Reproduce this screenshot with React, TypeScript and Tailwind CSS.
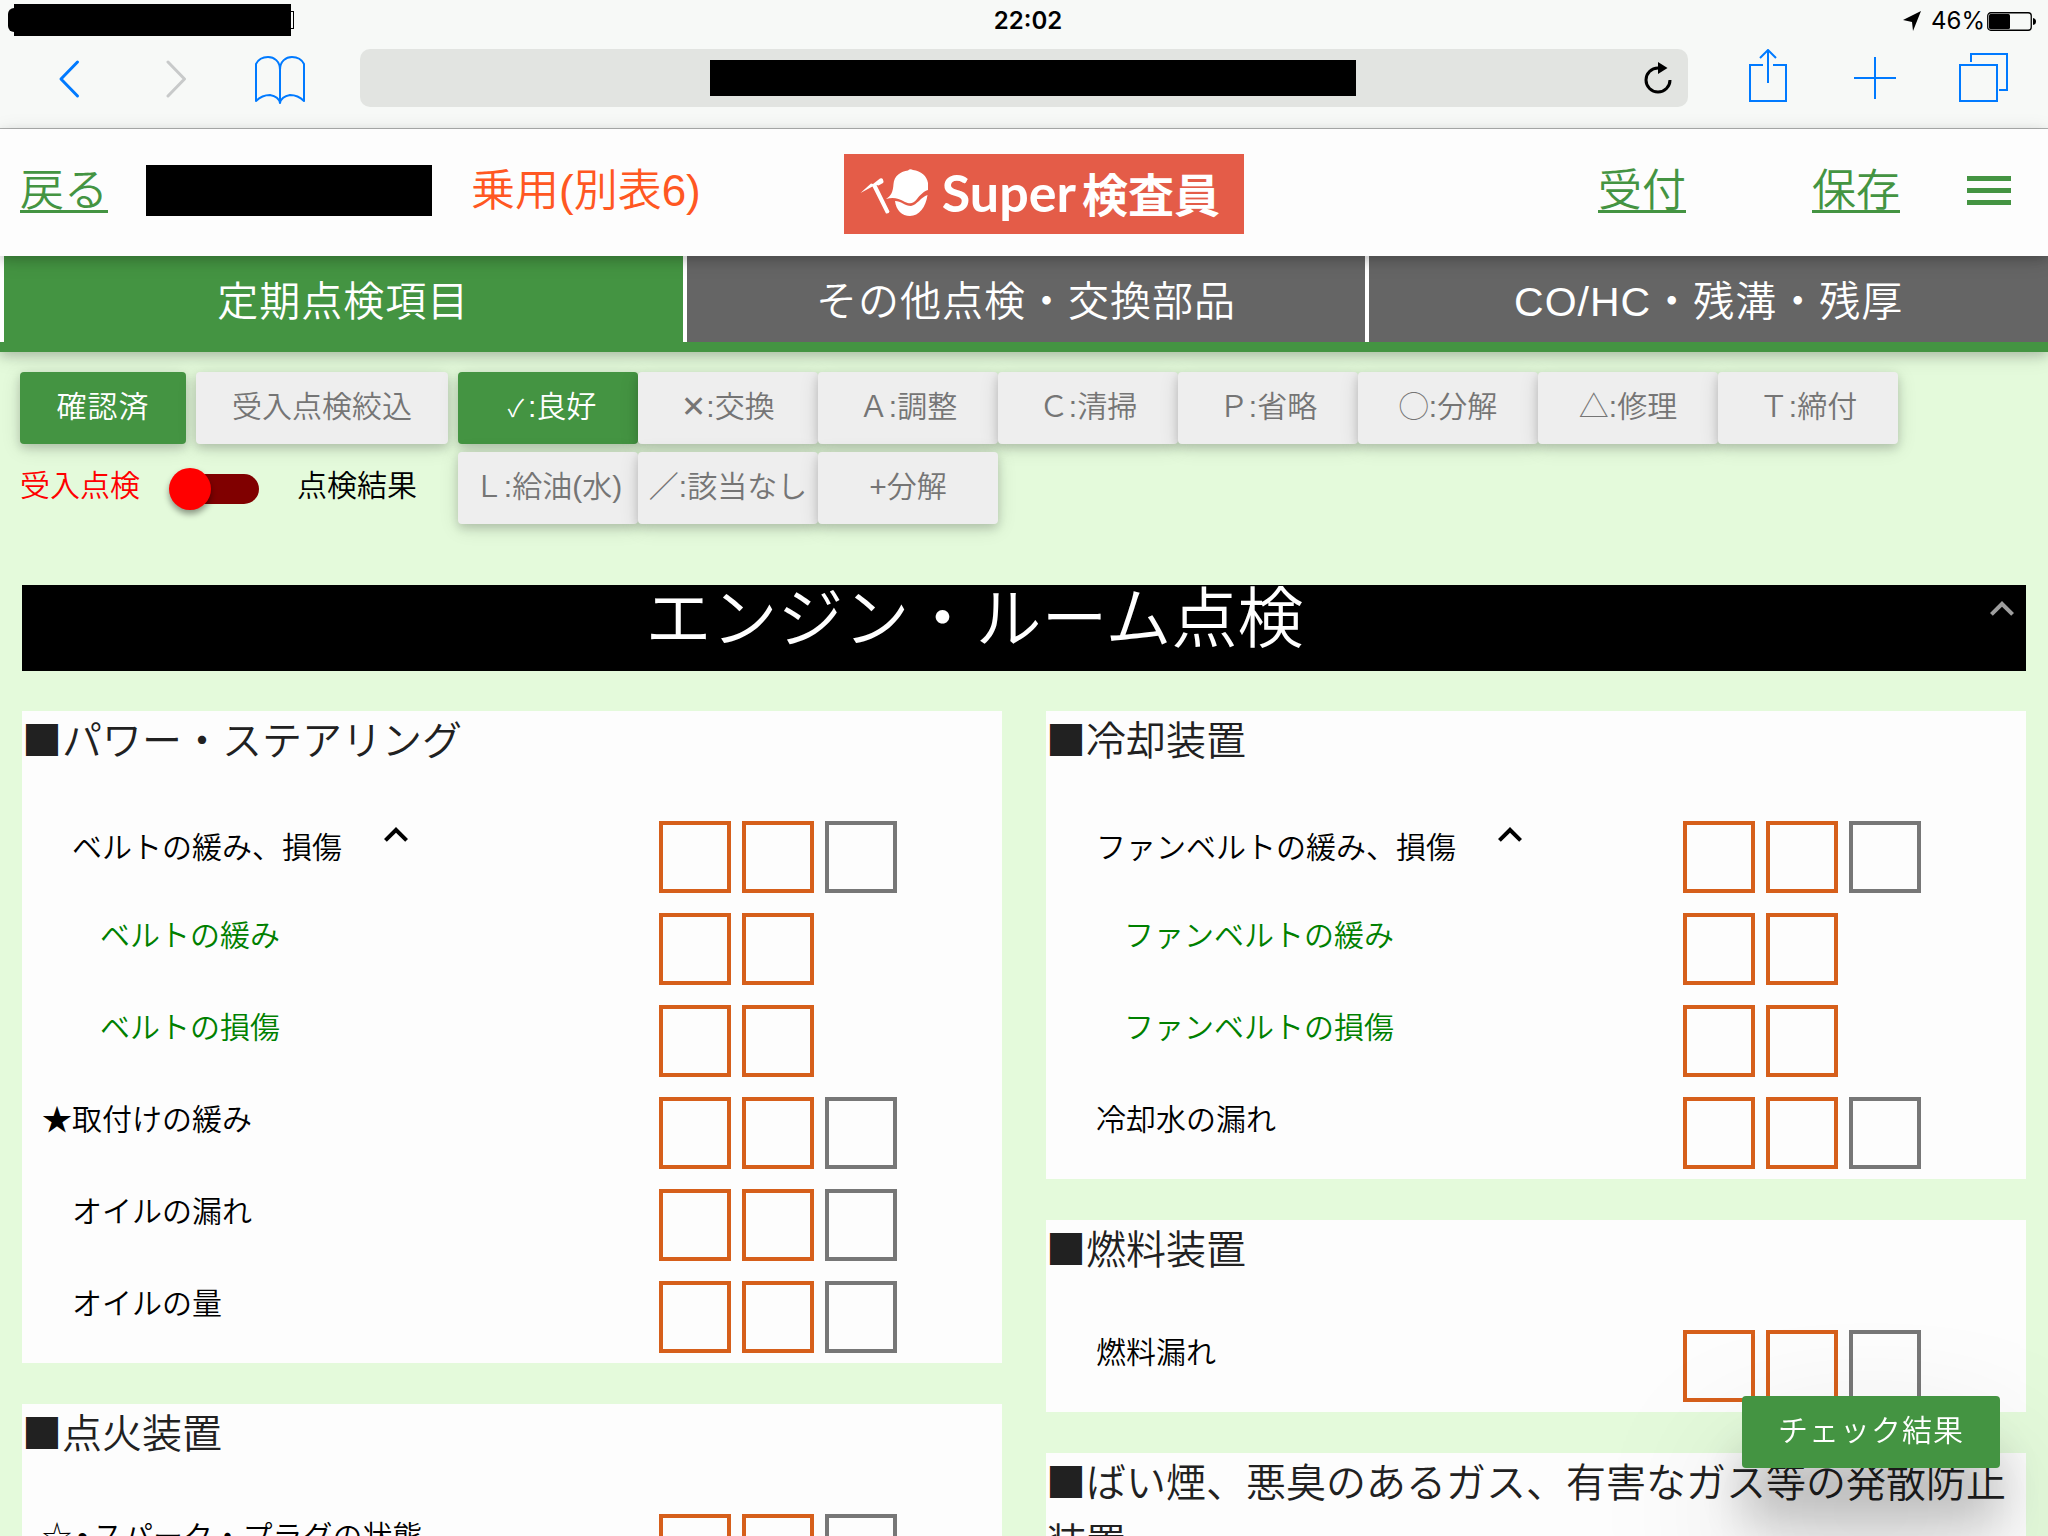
import React, { useState } from 'react';
import clsx from 'clsx';

const FONT = "font-['Liberation_Sans','Noto_Sans_CJK_JP',sans-serif]";
const FONT_JP = "font-['Noto_Sans_CJK_JP',sans-serif]";
const Z1 = 'shadow-[0_4px_10px_rgba(0,0,0,0.16),0_4px_20px_rgba(0,0,0,0.12)]';

const TABS = ['定期点検項目', 'その他点検・交換部品', 'CO/HC・残溝・残厚'];

const MARKS = [
  ['✓', ':良好'],
  ['✕', ':交換'],
  ['Ａ', ':調整'],
  ['Ｃ', ':清掃'],
  ['Ｐ', ':省略'],
  ['◯', ':分解'],
  ['△', ':修理'],
  ['Ｔ', ':締付'],
  ['Ｌ', ':給油(水)'],
  ['／', ':該当なし'],
  ['+', '分解'],
];

type Item = { label: string; mark?: string; bullet?: boolean; sub?: boolean; open?: boolean };
type Section = { title: string; items: Item[] };

const LEFT: Section[] = [
  {
    title: 'パワー・ステアリング',
    items: [
      { label: 'ベルトの緩み、損傷', open: true },
      { label: 'ベルトの緩み', sub: true },
      { label: 'ベルトの損傷', sub: true },
      { label: '取付けの緩み', mark: '★' },
      { label: 'オイルの漏れ' },
      { label: 'オイルの量' },
    ],
  },
  {
    title: '点火装置',
    items: [{ label: 'スパーク・プラグの状態', mark: '☆', bullet: true }],
  },
];

const RIGHT: Section[] = [
  {
    title: '冷却装置',
    items: [
      { label: 'ファンベルトの緩み、損傷', open: true },
      { label: 'ファンベルトの緩み', sub: true },
      { label: 'ファンベルトの損傷', sub: true },
      { label: '冷却水の漏れ' },
    ],
  },
  { title: '燃料装置', items: [{ label: '燃料漏れ' }] },
  { title: 'ばい煙、悪臭のあるガス、有害なガス等の発散防止装置', items: [] },
];

const ExpandLess: React.FC = () => (
  <svg viewBox="0 0 24 24" className="size-12" fill="currentColor">
    <path d="M12 8l-6 6 1.41 1.41L12 10.83l4.59 4.58L18 14z" />
  </svg>
);

const BrowserBar: React.FC = () => (
  <div className="shrink-0 border-b border-[#b0b2b1] bg-[#f7f9f7]">
    <div className="grid h-10 grid-cols-3 items-center pl-2 text-2xl text-black">
      <div className="flex items-center">
        <div className="h-6 w-[6px] rounded-l-md bg-black" />
        <div className="h-8 w-[277px] bg-black" />
        <div className="h-[18px] w-[3px] border border-l-0 border-black" />
      </div>
      <time className="pt-[2px] text-center font-['Inter',sans-serif] font-semibold">22:02</time>
      <div className="flex items-center justify-end gap-[2px] pr-3 pt-[2px] font-['Inter',sans-serif]">
        <svg viewBox="0 0 18 22" className="mr-2 h-[22px] w-[18px]">
          <path d="M18 1L0 10l9 2 1 9z" />
        </svg>
        <span>46%</span>
        <svg viewBox="0 0 49 19" className="h-[19px] w-[49px]">
          <rect x="0.75" y="0.75" width="43.5" height="17.5" rx="3" fill="none" stroke="#000" strokeWidth="1.3" />
          <rect x="2" y="2" width="21" height="15" rx="1.5" />
          <path d="M46 6q3 .5 3 3.500t-3 3.500z" />
        </svg>
      </div>
    </div>

    <div className="flex h-[88px] items-center pb-[12px] pl-[46px] pr-[38px] text-[#007aff]">
      <button aria-label="前へ" className="mr-[72px]">
        <svg viewBox="0 0 48 50" className="h-[50px] w-12" fill="none" stroke="currentColor" strokeWidth="3" strokeLinecap="round" strokeLinejoin="round">
          <path d="M31.500 9L15 26l16.500 17" />
        </svg>
      </button>
      <button aria-label="次へ" className="mr-[52px] text-[#c8caca]">
        <svg viewBox="0 0 36 50" className="h-[50px] w-9" fill="none" stroke="currentColor" strokeWidth="3" strokeLinecap="round" strokeLinejoin="round">
          <path d="M2 9l16.500 17L2 43" />
        </svg>
      </button>
      <button aria-label="ブックマーク" className="mr-[54px]">
        <svg viewBox="0 0 52 52" className="size-[52px]" fill="none" stroke="currentColor" strokeWidth="2" strokeLinejoin="round">
          <path d="M26 51V18C26 9 20 5 14 5C8 5 4 8 2 12V49C7 44 11 43 16 43C22 44 25 46 26 51C27 46 30 44 36 43C41 43 45 44 50 49V12C48 8 44 5 38 5C32 5 26 9 26 18" />
        </svg>
      </button>
      <div className="flex h-[58px] flex-1 items-center rounded-[10px] bg-[#e2e4e1] pr-4">
        <div className="flex-1 pl-[62px]">
          <div className="mx-auto h-9 w-[646px] bg-black" />
        </div>
        <button aria-label="再読み込み" className="text-black">
          <svg viewBox="0 0 28 32" className="h-8 w-7" fill="none" stroke="currentColor" strokeWidth="3">
            <path d="M14 6A12 12 0 1 0 26 18" />
            <path d="M14 0l9.500 6L14 12z" fill="currentColor" stroke="none" />
          </svg>
        </button>
      </div>
      <button aria-label="共有" className="ml-[60px]">
        <svg viewBox="0 0 40 58" className="h-[58px] w-10" fill="none" stroke="currentColor" strokeWidth="2">
          <path d="M15 16H2v36h36V16H25M20 34V1M12 9l8-8 8 8" />
        </svg>
      </button>
      <button aria-label="新規タブ" className="ml-[65px]">
        <svg viewBox="0 0 44 44" className="size-11" fill="none" stroke="currentColor" strokeWidth="2">
          <path d="M22 1v42M1 22h42" />
        </svg>
      </button>
      <button aria-label="タブ一覧" className="ml-[61px]">
        <svg viewBox="0 0 52 52" className="size-[52px]" fill="none" stroke="currentColor" strokeWidth="2">
          <path d="M2 13h37v36H2zM13 10V2h36v36h-8" />
        </svg>
      </button>
    </div>
  </div>
);

const Logo: React.FC = () => (
  <div className="flex h-20 w-[400px] items-center bg-[#e45c48] pb-1 pl-4 text-white">
    <svg viewBox="0 -2 70 64" className="h-16 w-[70px] shrink-0" fill="currentColor">
      <path d="M.5 31L11 21.500 13 22 20 16.500Q22 15.500 23 17.500Q24 20 23 21L18.500 23.500 16.500 23 29.500 49.500Q29 52 26 51.500L12.500 24.500Z" />
      <path d="M26 37C31 34 33 30 33.500 22C34 14 41 9 48 8.500Q50 6.500 53 8C61 9 67 14 68 21V28C64 29 60 33 57 37C53 42 50 42 45 40C38 36 33 35 26 37Z" />
      <path d="M35 39C41 39 45 44 51 44C57 43 61 35 67.500 33C66 45 59 54 50 54C42 54 36 48 35 39Z" />
    </svg>
    <span className="ml-3 font-['Lato',sans-serif] text-[52px] font-bold leading-[60px]">Super</span>
    <span className={clsx(FONT_JP, 'ml-[6px] text-[46px] font-bold leading-[60px]')}>検査員</span>
  </div>
);

const PageHeader: React.FC = () => (
  <header className={clsx(Z1, 'relative z-10 flex h-[127px] shrink-0 items-center bg-[#fdfdfd] pb-1 pl-5 pr-[29px] text-[44px] font-[350] text-[#449442]')}>
    <a href="#back" className="underline decoration-[3px] underline-offset-4">戻る</a>
    <div className="ml-[38px] h-[51px] w-[286px] bg-black" />
    <span className="ml-[39px] text-[#ff5722]">乗用(別表6)</span>
    <div className="ml-[143px] mt-[7px]">
      <Logo />
    </div>
    <nav className="ml-auto flex items-center">
      <a href="#reception" className="underline decoration-[3px] underline-offset-4">受付</a>
      <a href="#save" className="ml-[126px] underline decoration-[3px] underline-offset-4">保存</a>
      <button aria-label="メニュー" className="ml-[59px]">
        <svg viewBox="0 0 60 60" className="size-[60px]" fill="currentColor">
          <path d="M8 15h44v5H8zM8 27h44v5H8zM8 39h44v5H8z" />
        </svg>
      </button>
    </nav>
  </header>
);

const Tabs: React.FC = () => {
  const [active, setActive] = useState(0);

  return (
    <div className={clsx(Z1, 'grid grid-cols-3 border-b-[10px] border-[#449442]')} role="tablist">
      {TABS.map((tab, i) => (
        <button
          key={tab}
          role="tab"
          aria-selected={i === active}
          onClick={() => setActive(i)}
          className={clsx(
            'h-[86px] border-l-4 border-white pt-2 text-[41px] font-[350] tracking-[1px] text-white',
            i === active ? 'bg-[#449442]' : 'bg-[#656565]',
          )}
        >
          {tab}
        </button>
      ))}
    </div>
  );
};

const Toolbar: React.FC = () => {
  const [mark, setMark] = useState(0);

  return (
    <div className="flex items-start px-5 pt-5 text-[30px] font-[350]">
      <div className="w-[438px] shrink-0">
        <div className="flex gap-[10px]">
          <button className={clsx(Z1, 'h-[72px] w-[166px] rounded bg-[#449442] pb-[3px] tracking-[1px] text-white')}>確認済</button>
          <button className={clsx(Z1, 'h-[72px] w-[252px] rounded bg-[#eeeeee] pb-[3px] text-[#757575]')}>受入点検絞込</button>
        </div>
        <label className="flex h-[90px] items-center text-black">
          <span className="pb-2 text-[#ff0000]">受入点検</span>
          <input type="checkbox" role="switch" className="peer sr-only" />
          <span className="ml-[29px] flex h-[30px] w-[90px] items-center rounded-full bg-gradient-to-r from-transparent from-10% to-[#800000] to-10% peer-checked:justify-end">
            <span className="size-[42px] shrink-0 rounded-full bg-[#ff0000] shadow-[0_4px_6px_rgba(0,0,0,0.4)]" />
          </span>
          <span className="ml-[38px] pb-2">点検結果</span>
        </label>
      </div>
      <div className="flex max-w-[1540px] flex-wrap gap-y-2">
        {MARKS.map(([symbol, text], i) => (
          <button
            key={symbol}
            onClick={() => setMark(i)}
            className={clsx(
              Z1,
              'h-[72px] w-[180px] whitespace-nowrap rounded pb-[3px]',
              i === mark ? 'bg-[#449442] text-white' : 'bg-[#eeeeee] text-[#757575]',
            )}
          >
            <span className={clsx(symbol === '✓' && 'pl-2 pr-1 text-2xl')}>{symbol}</span>
            {text}
          </button>
        ))}
      </div>
    </div>
  );
};

const CheckRow: React.FC<{ item: Item }> = ({ item }) => (
  <div className="flex h-[92px] items-start text-[30px] font-[350]">
    <div className={clsx('flex w-[637px] shrink-0', item.sub ? 'pl-[78px] text-[#008000]' : 'pl-5 text-black')}>
      {!item.sub && <span className="w-[30px] pt-[10px] leading-[45px]">{item.mark}</span>}
      {item.bullet && (
        <span className="w-[21px] pt-[10px] text-center font-['DejaVu_Sans',sans-serif] leading-[45px]">•</span>
      )}
      <span className={clsx('leading-[45px]', item.open ? 'pt-[14px]' : 'pt-[10px]')}>{item.label}</span>
      {item.open && (
        <button aria-label="閉じる" className="ml-[30px] size-12">
          <ExpandLess />
        </button>
      )}
    </div>
    <div className="flex gap-[11px] pt-[10px]">
      <button aria-label={`${item.label} 受入`} className="size-[72px] border-4 border-[#d65f1b]" />
      <button aria-label={`${item.label} 点検`} className="size-[72px] border-4 border-[#d65f1b]" />
      {!item.sub && <button aria-label={`${item.label} 結果`} className="size-[72px] border-4 border-[#777777]" />}
    </div>
  </div>
);

const Card: React.FC<{ section: Section }> = ({ section }) => (
  <section className="bg-[#fdfdfd]">
    <h3 className="mb-10 text-[40px] font-[350] leading-[60px] text-[#212121]">
      <span className={clsx(FONT_JP, 'leading-none')}>■</span>
      {section.title}
    </h3>
    {section.items.map((item) => (
      <CheckRow key={item.label} item={item} />
    ))}
  </section>
);

const App: React.FC = () => (
  <div className={clsx(FONT, 'flex h-screen flex-col overflow-hidden bg-[#e4fadb]')}>
    <BrowserBar />
    <PageHeader />
    <main className="flex-1 overflow-y-auto [scrollbar-width:none]">
      <Tabs />
      <Toolbar />
      <div className="px-[22px] pt-[51px]">
        <div className="flex h-[86px] items-start bg-black text-white">
          <h2 className="flex-1 text-center text-[66px] font-[350] leading-[68px]">エンジン・ルーム点検</h2>
          <button aria-label="閉じる" className="w-[99px] pl-[51px] text-[#9e9e9e]">
            <ExpandLess />
          </button>
        </div>
        <div className="grid grid-cols-2 gap-x-11 pt-10">
          <div className="flex flex-col gap-[41px]">
            {LEFT.map((s) => <Card key={s.title} section={s} />)}
          </div>
          <div className="flex flex-col gap-[41px]">
            {RIGHT.map((s) => <Card key={s.title} section={s} />)}
          </div>
        </div>
      </div>
    </main>
    <button className="fixed bottom-[68px] right-12 h-[72px] w-[258px] rounded bg-[#449442] pb-[3px] text-[30px] font-[350] tracking-[1px] text-white shadow-[0_54px_48px_rgba(0,0,0,0.2),0_80px_154px_rgba(0,0,0,0.22)]">
      チェック結果
    </button>
  </div>
);

export default App;
